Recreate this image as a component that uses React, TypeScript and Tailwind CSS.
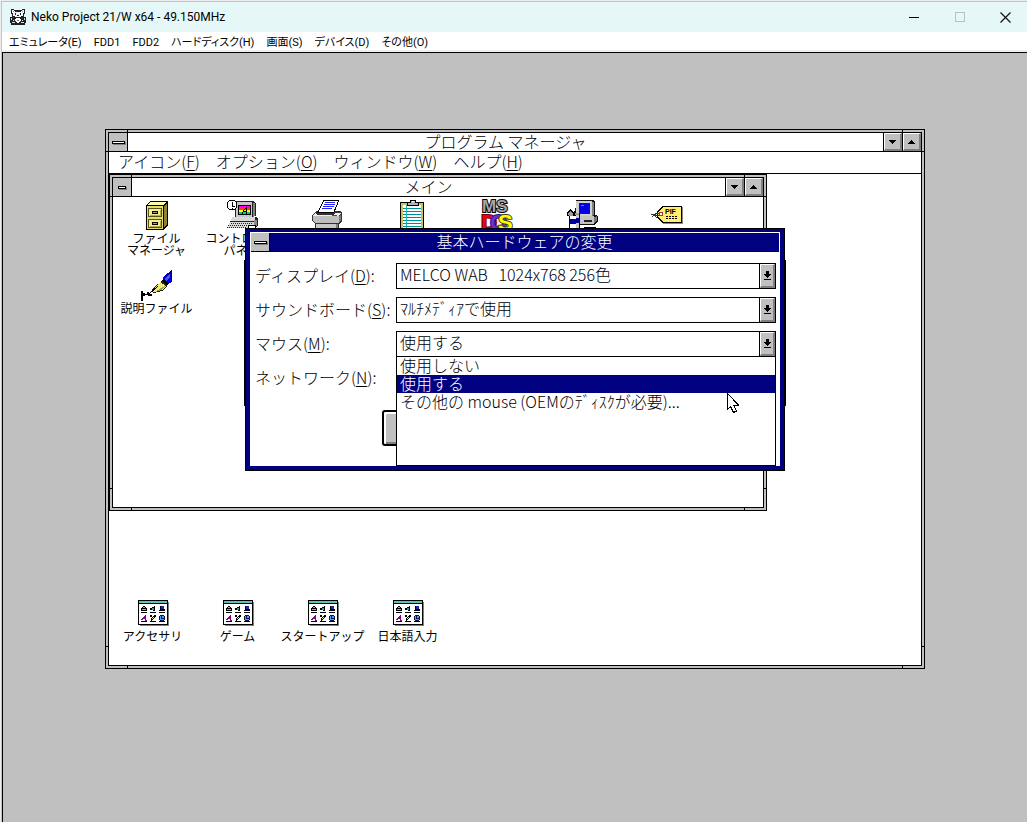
import { useState, type ReactNode } from "react";
import clsx from "clsx";

const MENUS = [
  "エミュレータ(E)",
  "FDD1",
  "FDD2",
  "ハードディスク(H)",
  "画面(S)",
  "デバイス(D)",
  "その他(O)",
];

const MOUSE_OPTIONS = [
  "使用しない",
  "使用する",
  "その他の mouse (OEMのﾃﾞｨｽｸが必要)...",
];

function Svg({ children }: { children: ReactNode }) {
  return (
    <svg
      viewBox="0 0 32 32"
      className="block h-8 w-8 shrink-0 overflow-visible"
      shapeRendering="crispEdges"
      aria-hidden="true"
    >
      {children}
    </svg>
  );
}

function CatIcon() {
  return (
    <svg viewBox="0 0 16 16" className="h-4 w-4" shapeRendering="crispEdges" aria-hidden="true">
      <path d="M1 0h3v1h8V0h3v5h-1v3h2v6h-1v2H1v-2H0V8h2V5H1z" fill="#222" />
      <path d="M2 1h2v1h1v1h6V2h1V1h2v3h-1v3h-2v1H5V7H3V4H2z" fill="#f4f4f4" />
      <path d="M5 4h1v2H5zM10 4h1v2h-1zM7 6h2v1H7z" fill="#222" />
      <path d="M3 2h1v1H3zM12 2h1v1h-1z" fill="#999" />
      <path d="M6 9h4v1h1v2h-1v1H9v1H7v-1H6v-1H5v-2h1z" fill="#fff" />
      <path d="M1 9h1v2H1zM14 9h1v2h-1zM3 11h1v1H3zM12 11h1v1h-1zM2 13h3v1H2zM11 13h3v1h-3z" fill="#ddd" />
      <path d="M7 11h2v1H7z" fill="#777" />
    </svg>
  );
}

function CabinetIcon() {
  return (
    <Svg>
      <path d="M5 5l4-4h18v24l-4 5H5z" fill="#000" />
      <path d="M9 2h16l-3 3H6z" fill="#ffffa0" />
      <path d="M26 3v21l-3 4V6z" fill="#8c8430" />
      <path d="M6 6h16v23H6z" fill="#e3da72" />
      <path d="M7 8h14v9H7zM7 19h14v9H7z" fill="#57511a" />
      <path d="M8 9h12v7H8zM8 20h12v7H8z" fill="#f5ee8e" />
      <path d="M19 10h1v6H9v-1h10zM19 21h1v6H9v-1h10z" fill="#b5ab48" />
      <path d="M11 11h6v3h-6zM11 22h6v3h-6z" fill="#000" />
      <path d="M12 12h4v1h-4zM12 23h4v1h-4z" fill="#9b9b9b" />
    </Svg>
  );
}

function ControlPanelIcon() {
  return (
    <Svg>
      <path d="M9 2l2-1h16l3 2v13h-3l5 2v7l-3 3H1l4-8h4z" fill="#222" />
      <path d="M10 2h16v15H10z" fill="#c8c8c8" />
      <path d="M27 3h2v12l-2 2z" fill="#808080" />
      <path d="M12 5h13v10H12z" fill="#000" />
      <path d="M13 6h11v2H13z" fill="#f0f" />
      <path d="M13 8h11v2H13z" fill="#f33" />
      <path d="M13 10h11v2H13z" fill="#ff0" />
      <path d="M13 12h11v2H13z" fill="#0c9" />
      <path d="M20 7h1v7h-1zM19 8h1v1h-1zM18 9h1v1h-1zM17 10h1v2h-1zM17 11h4v1h-4zM16 12h1v2h-1z" fill="#000" />
      <path d="M6 17h23v4H5z" fill="#d8d8d8" />
      <path d="M4 22h25v6H2z" fill="#d8d8d8" />
      <path d="M28 20h3v5l-3 3z" fill="#8a8a8a" />
      <path d="M5 23.500h22M4 25.500h18M3 27.500h18" stroke="#222" strokeDasharray="1 1" />
      <path d="M22 25h7l1 2-3 3h-5z" fill="#fff" stroke="#000" />
      <circle cx="6" cy="5" r="5" fill="#fff" stroke="#000" />
      <path d="M6 2v4h3M1 5h1M6 9v-1" fill="none" stroke="#000" />
    </Svg>
  );
}

function PrinterIcon() {
  return (
    <Svg>
      <path d="M5 11h3l-1 2h15l2-2h5l2 2v8l-3 3v8H4v-8l-3-3v-5z" fill="#333" />
      <path d="M5 12l-3 4h26l2-3h-6l-2 2H6z" fill="#eee" />
      <path d="M2 16h26v7H4l-2-2z" fill="#bfbfbf" />
      <path d="M28 16l2-2v6l-2 3z" fill="#7d7d7d" />
      <path d="M21 15h5v1h-5z" fill="#f00" />
      <path d="M5 24h20v7H5z" fill="#c8c8c8" />
      <path d="M25 24h2v6h-2z" fill="#808080" />
      <path d="M13 0h15l-5 12H7z" fill="#fff" stroke="#000" />
      <path d="M14 2.500h10M13 4.500h11M12 6.500h11M11 8.500h10" stroke="#22f" />
    </Svg>
  );
}

function ClipboardIcon() {
  return (
    <Svg>
      <path d="M4 2h24v30H4z" fill="#000" />
      <path d="M5 3h22v29H5z" fill="#c9c35c" />
      <path d="M7 5h18v27H7z" fill="#fff" />
      <path d="M7 8.500h18M7 11.500h18M7 14.500h18M7 17.500h18M7 20.500h18M7 23.500h18M7 26.500h18M7 29.500h18" stroke="#008c96" />
      <path d="M10.500 5v27" stroke="#1bb" />
      <path d="M14 0h6v2h3v4H11V2h3z" fill="#000" />
      <path d="M15 1h4v2h3v2H12V3h3z" fill="#b4b4b4" />
      <path d="M16 1h2v1h-2z" fill="#fff" />
    </Svg>
  );
}

function DosIcon() {
  return (
    <Svg>
      <g fontFamily="Liberation Sans, sans-serif" fontWeight="700" strokeWidth="2" paintOrder="stroke">
        <text x="1" y="12" fontSize="17" fill="#a6a6a6" stroke="#000">
          MS
        </text>
        <text y="30" fontSize="22">
          <tspan x="0" fill="#f00010" stroke="#700">D</tspan>
          <tspan x="9" fill="#63c" stroke="#219">O</tspan>
          <tspan x="17" fill="#ff0" stroke="#440">S</tspan>
        </text>
      </g>
    </Svg>
  );
}

function SetupIcon() {
  return (
    <Svg>
      <path d="M10 0h17l2 2v13l3 1v5l-4 4H13l-4-8z" fill="#111" />
      <path d="M10 1h16v15H10z" fill="#d0d0d0" />
      <path d="M26 2h2v12l-2 2z" fill="#808080" />
      <path d="M13 3h11v11H13z" fill="#222" />
      <path d="M14 4h9v9h-9z" fill="#0000e0" />
      <path d="M15 5h3v1h-3z" fill="#77f" />
      <path d="M14 16h14v8H14z" fill="#c4c4c4" />
      <path d="M28 17l3-1v4l-3 4z" fill="#777" />
      <path d="M18 20h8v2h-8z" fill="#222" />
      <path d="M1 13l3-4 3 3 2-2v4h5v18H3V16H1z" fill="#000" />
      <path d="M2 13l2-2 3 3v2H3zM9 13h4v2H9z" fill="#999" />
      <path d="M4 16h6v5H4zM4 26h6v6H4z" fill="#fff" />
      <path d="M4 19h6v5H4z" fill="#00a" />
      <path d="M4 24h6v3H4z" fill="#fff" />
      <path d="M10 15h3v17h-3z" fill="#c8c8c8" />
      <path d="M10 18h3v5h-3z" fill="#008" />
      <path d="M18 27h12v5H18z" fill="#000" />
      <path d="M19 28h10v4H19z" fill="#fff36b" />
    </Svg>
  );
}

function PifIcon() {
  return (
    <Svg>
      <path d="M12 7h20v17H12z" fill="#888" />
      <path d="M11 6h19l1 1v15l-1 1H11l-5-5v-7z" fill="#000" />
      <path d="M12 7h18v15H12l-5-5v-5z" fill="#ffee72" />
      <circle cx="10" cy="14" r="2" fill="#fff" stroke="#a33" />
      <path d="M0 14h4v1h5M1 17l3-3 4-1M3 15l3 3" fill="none" stroke="#333" />
      <text x="14" y="14" fontSize="7" fontWeight="700" fontFamily="Liberation Sans, sans-serif">
        PIF
      </text>
      <path d="M15 16.500h12M15 18.500h12" stroke="#000" strokeDasharray="2 1" />
    </Svg>
  );
}

function PenIcon() {
  return (
    <Svg>
      <path d="M31 0v12l-4 2-5-5 1-3z" fill="#0000d8" />
      <path d="M29 3v5l-4 3-1-2z" fill="#4c4cff" />
      <path d="M31 0v12h-1V3l-6 5-1-1z" fill="#000080" />
      <path d="M22 9l6 5-3 2-5-5z" fill="#000" />
      <path d="M21 11l5 5-5 5-8 2-3-1 3-5z" fill="#222" />
      <path d="M19 12l6 4-4 4-8 2-2-1 3-4z" fill="#f0ea7a" />
      <path d="M24 16l-3 4-7 2 6-4z" fill="#a79f3b" />
      <path d="M17 16l-9 8" stroke="#000" />
      <path d="M0 21h2v2l4 1v-2h2v2h3v2H8l-3-1-3 1v5H0z" fill="#000" />
    </Svg>
  );
}

function GroupIcon() {
  return (
    <Svg>
      <path d="M3 4h29v24H3z" fill="#808080" />
      <path d="M1 2h30v25H1z" fill="#000" />
      <path d="M2 3h28v2H2z" fill="#5cc4bc" />
      <path d="M2 6h28v20H2z" fill="#fff" />
      <path d="M4 14h6v1H4zM13 14h6v1h-6zM22 14h6v1h-6zM4 23h6v1H4zM13 23h6v1h-6zM22 23h6v1h-6z" fill="#000" />
      <path d="M6 8h2v1h1v1h1v3H4v-3h1V9h1z" fill="#000" />
      <path d="M6 9h2v1H6zM5 11h4v1H5z" fill="#aaa" />
      <path d="M17 8h1v5h-2v-1h-3v-2h2V9h2z" fill="#000" />
      <path d="M15 10h2v2h-2z" fill="#2aa08a" />
      <path d="M23 8h4v3h1v2h-6v-1h1z" fill="#000" />
      <path d="M24 8h3v3h-3z" fill="#22b" />
      <path d="M8 17h1v5h1v1H8v-2H6v1H4v-1h1v-1h1v-1h1v-1h1z" fill="#808" />
      <path d="M13 17h2v2h-2zM17 17h2v2h-1v1h-1v1h-1v1h-1v1h-1v-3h1v-1h1v-1h1z" fill="#000" />
      <path d="M16 19h1v1h-1v1h-1v-1h1z" fill="#fd5" />
      <path d="M23 17h4v1h1v4h-1v1h-4v-1h-1v-4h1z" fill="#114" />
      <path d="M23 18h4v4h-4z" fill="#3af" />
      <path d="M24 18h1v2h2v1h-3z" fill="#114" />
    </Svg>
  );
}

const MAIN_ITEMS: { icon: ReactNode; lines: string[] }[] = [
  { icon: <CabinetIcon />, lines: ["ファイル", "マネージャ"] },
  { icon: <ControlPanelIcon />, lines: ["コントロール", "パネル"] },
  { icon: <PrinterIcon />, lines: [] },
  { icon: <ClipboardIcon />, lines: [] },
  { icon: <DosIcon />, lines: [] },
  { icon: <SetupIcon />, lines: [] },
  { icon: <PifIcon />, lines: [] },
  { icon: <PenIcon />, lines: ["説明ファイル"] },
];

const GROUPS = ["アクセサリ", "ゲーム", "スタートアップ", "日本語入力"];

function ProgramItem({ icon, lines }: { icon: ReactNode; lines: string[] }) {
  return (
    <div className="flex flex-col items-center text-[12px] leading-3 font-normal whitespace-nowrap">
      {icon}
      {lines.map((line) => (
        <span key={line}>{line}</span>
      ))}
    </div>
  );
}

function SystemButton({ small }: { small?: boolean }) {
  return (
    <button
      aria-label="−"
      className="flex w-[19px] shrink-0 items-center justify-center border-r border-black bg-[#c0c0c0]"
    >
      <span
        className={clsx(
          "border border-black bg-white shadow-[1px_1px_0_#808080]",
          small ? "h-[3px] w-2" : "h-[3px] w-[13px]",
        )}
      />
    </button>
  );
}

function SizeButton({ up }: { up?: boolean }) {
  return (
    <button
      aria-label={up ? "▲" : "▼"}
      className="flex w-[19px] shrink-0 border-l border-black"
    >
      <span className="flex flex-1 items-center justify-center self-stretch border-t border-r-2 border-b-2 border-l border-t-white border-r-[#808080] border-b-[#808080] border-l-white bg-[#c0c0c0]">
        <svg viewBox="0 0 7 4" className="h-1 w-[7px]" shapeRendering="crispEdges" aria-hidden="true">
          <path d={up ? "M3 0h1v1h1v1h1v1h1v1H0V3h1V2h1V1h1z" : "M0 0h7v1H6v1H5v1H4v1H3V3H2V2H1V1H0z"} />
        </svg>
      </span>
    </button>
  );
}

/* Corner marks on the sizing frame */
function FrameNotches() {
  return (
    <>
      <i className="absolute top-0 left-[21px] h-[2px] w-px bg-black" />
      <i className="absolute top-0 right-[21px] h-[2px] w-px bg-black" />
      <i className="absolute bottom-0 left-[21px] h-[2px] w-px bg-black" />
      <i className="absolute right-[21px] bottom-0 h-[2px] w-px bg-black" />
      <i className="absolute top-[21px] left-0 h-px w-[2px] bg-black" />
      <i className="absolute top-[21px] right-0 h-px w-[2px] bg-black" />
      <i className="absolute bottom-[21px] left-0 h-px w-[2px] bg-black" />
      <i className="absolute right-0 bottom-[21px] h-px w-[2px] bg-black" />
    </>
  );
}

interface FrameProps {
  title: string;
  child?: boolean;
  className: string;
  children: ReactNode;
}

function Frame({ title, child, className, children }: FrameProps) {
  return (
    <section className={clsx("absolute flex border border-black bg-[#c0c0c0] p-[2px]", className)}>
      <FrameNotches />
      <div className="flex min-w-0 flex-1 flex-col border border-black bg-white">
        <header className="flex h-[19px] shrink-0 border-b border-black">
          <SystemButton small={child} />
          <h2 className="flex-1 text-center text-[16px] leading-4">{title}</h2>
          <SizeButton />
          <SizeButton up />
        </header>
        {children}
      </div>
    </section>
  );
}

function Mnemonic({ text, letter }: { text: string; letter: string }) {
  return (
    <>
      {text}(<u className="underline decoration-1 underline-offset-2">{letter}</u>)
    </>
  );
}

function DropArrow() {
  return (
    <span className="pointer-events-none absolute inset-y-0 right-0 flex w-[17px] border border-black">
      <span className="flex flex-1 items-center justify-center border-t border-r-2 border-b-2 border-l border-t-white border-r-[#808080] border-b-[#808080] border-l-white bg-[#c0c0c0]">
        <svg viewBox="0 0 7 9" className="h-[9px] w-[7px]" shapeRendering="crispEdges" aria-hidden="true">
          <path d="M2 0h3v3h2v1H6v1H5v1H4v1H3V6H2V5H1V4H0V3h2zM0 8h7v1H0z" />
        </svg>
      </span>
    </span>
  );
}

interface ComboRowProps {
  id: string;
  label: string;
  letter: string;
  options: string[];
  value?: string;
  onChange?: (value: string) => void;
  children?: ReactNode;
}

function ComboRow({ id, label, letter, options, value, onChange, children }: ComboRowProps) {
  return (
    <div className="flex h-[26px]">
      <label htmlFor={id} className="w-[141px] shrink-0 leading-6 whitespace-nowrap">
        <Mnemonic text={label} letter={letter} />:
      </label>
      <div className="relative flex-1">
        <select
          id={id}
          value={value ?? options[0]}
          onChange={(e) => onChange?.(e.target.value)}
          className="block h-[26px] w-full appearance-none border border-black bg-white pr-5 pb-1 pl-[3px] leading-5 whitespace-pre outline-none"
        >
          {options.map((option) => (
            <option key={option}>{option}</option>
          ))}
        </select>
        <DropArrow />
        {children}
      </div>
    </div>
  );
}

function HardwareDialog() {
  const [mouse, setMouse] = useState(MOUSE_OPTIONS[1]);

  return (
    <section
      role="dialog"
      className="absolute top-[175px] left-[242px] w-[540px] border border-black text-[16px]"
    >
      <div className="border-x-4 border-t-[3px] border-b-4 border-[#000080] bg-white">
        <header className="mx-px mt-px flex h-[19px] border-b border-black bg-[#000080]">
          <SystemButton />
          <h2 className="flex-1 text-center leading-4 text-white">基本ハードウェアの変更</h2>
        </header>
        <form className="pt-[11px] pr-1 pb-5 pl-[5px]" onSubmit={(e) => e.preventDefault()}>
          <div className="flex flex-col gap-2">
            <ComboRow
              id="display"
              label="ディスプレイ"
              letter="D"
              options={["MELCO WAB\u00a0\u00a0 1024x768 256色"]}
            />
            <ComboRow
              id="sound"
              label="サウンドボード"
              letter="S"
              options={["ﾏﾙﾁﾒﾃﾞｨｱで使用"]}
            />
            <ComboRow
              id="mouse"
              label="マウス"
              letter="M"
              options={MOUSE_OPTIONS}
              value={mouse}
              onChange={setMouse}
            >
              <ul
                role="listbox"
                className="absolute top-[25px] left-0 z-10 h-[110px] w-full border border-black bg-white"
              >
                {MOUSE_OPTIONS.map((option) => (
                  <li
                    key={option}
                    role="option"
                    aria-selected={option === mouse}
                    onClick={() => setMouse(option)}
                    className={clsx(
                      "h-[18px] pl-[3px] leading-4 whitespace-nowrap",
                      option === mouse && "bg-[#000080] text-white",
                    )}
                  >
                    {option}
                  </li>
                ))}
              </ul>
            </ComboRow>
            <ComboRow id="network" label="ネットワーク" letter="N" options={[""]} />
          </div>
          <button
            type="submit"
            className="mt-[19px] ml-[127px] block h-9 w-24 rounded-[3px] border-2 border-black bg-[#c0c0c0] shadow-[inset_2px_2px_0_#fff,inset_-2px_-2px_0_#808080]"
          />
        </form>
      </div>
    </section>
  );
}

function ProgramManager() {
  return (
    <Frame title="プログラム マネージャ" className="top-[76px] left-[102px] h-[540px] w-[820px]">
      <nav className="flex h-[22px] shrink-0 items-start gap-4 border-b border-black pl-[9px] text-[16px] leading-[18px]">
        <button><Mnemonic text="アイコン" letter="F" /></button>
        <button><Mnemonic text="オプション" letter="O" /></button>
        <button><Mnemonic text="ウィンドウ" letter="W" /></button>
        <button><Mnemonic text="ヘルプ" letter="H" /></button>
      </nav>
      <div className="relative flex flex-1 flex-col justify-end">
        <div className="grid auto-rows-[67px] grid-cols-[repeat(4,85px)] pl-px">
          {GROUPS.map((name) => (
            <ProgramItem key={name} icon={<GroupIcon />} lines={[name]} />
          ))}
        </div>
        <Frame title="メイン" child className="top-0 left-0 h-[337px] w-[658px]">
          <div className="grid auto-rows-[70px] grid-cols-[repeat(7,85px)] pt-[3px] pl-px">
            {MAIN_ITEMS.map((item, i) => (
              <ProgramItem key={i} icon={item.icon} lines={item.lines} />
            ))}
          </div>
        </Frame>
      </div>
    </Frame>
  );
}

function Cursor() {
  return (
    <svg
      viewBox="0 0 12 20"
      className="pointer-events-none absolute top-[340px] left-[724px] z-20 h-5 w-3"
      shapeRendering="crispEdges"
      aria-hidden="true"
    >
      <path d="M0.500 0.500v16l3-3 3 6 3-1.500-3-6h5z" fill="#fff" stroke="#000" />
    </svg>
  );
}

export default function App() {
  return (
    <div className="flex min-h-screen bg-[#ececec] pt-px pl-px font-['Noto_Sans_CJK_JP',sans-serif] font-light text-black">
      <div className="flex min-w-0 flex-1 flex-col border-t border-l border-[#c4c4c4]">
        <header className="flex h-[30px] shrink-0 items-center bg-[#e5f8f7] pl-2 font-['Roboto','Noto_Sans_CJK_JP',sans-serif] font-normal">
          <CatIcon />
          <h1 className="ml-[5px] flex-1 text-[12px]">Neko Project 21/W x64 - 49.150MHz</h1>
          <button aria-label="−" className="flex h-full w-[46px] items-center justify-center">
            <span className="h-px w-[10px] bg-black" />
          </button>
          <button aria-label="□" disabled className="flex h-full w-[46px] items-center justify-center">
            <span className="h-[10px] w-[10px] border border-[#b4c4c3]" />
          </button>
          <button aria-label="×" className="flex h-full w-11 items-center justify-center">
            <svg viewBox="0 0 11 11" className="h-[11px] w-[11px]" aria-hidden="true">
              <path d="M0.500 0.500l10 10M10.500 0.500l-10 10" stroke="#111" strokeWidth="1.200" />
            </svg>
          </button>
        </header>
        <nav className="flex h-5 shrink-0 items-center gap-3 border-b-2 border-[#f0f0f0] bg-white pt-[3px] pl-[7px] font-['Roboto','Noto_Sans_CJK_JP',sans-serif] text-[11px] leading-4 font-normal [font-feature-settings:'palt']">
          {MENUS.map((menu) => (
            <button key={menu} className="whitespace-nowrap">
              {menu}
            </button>
          ))}
        </nav>
        <main className="relative flex-1 overflow-hidden border-t border-l border-black bg-[#c0c0c0]">
          <ProgramManager />
          <div className="absolute top-[207px] left-[241px] h-[146px] w-[542px] bg-black" />
          <HardwareDialog />
          <Cursor />
        </main>
      </div>
    </div>
  );
}
